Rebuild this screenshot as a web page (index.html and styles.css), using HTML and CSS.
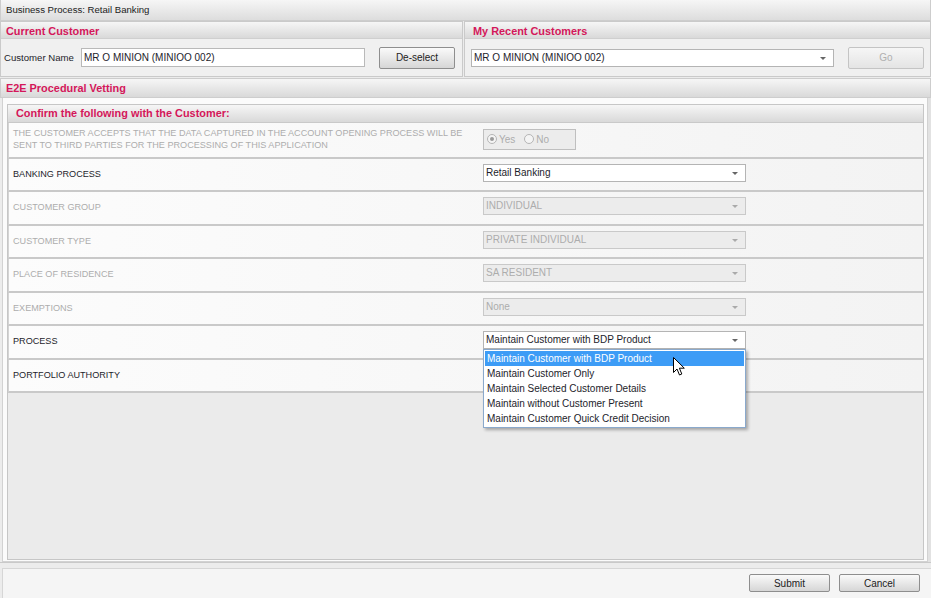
FILE: index.html
```html
<!DOCTYPE html>
<html>
<head>
<meta charset="utf-8">
<title>Business Process: Retail Banking</title>
<link rel="stylesheet" href="styles.css">
</head>
<body>
<div class="app">
  <div class="topbar">Business Process: Retail Banking</div>

  <div class="panels">
    <section class="panel">
      <div class="panel-head">Current Customer</div>
      <div class="panel-body">
        <span class="field-label">Customer Name</span>
        <div class="textbox">MR O MINION (MINIOO 002)</div>
        <button class="btn btn-deselect">De-select</button>
      </div>
    </section>
    <section class="panel panel-recent">
      <div class="panel-head">My Recent Customers</div>
      <div class="panel-body">
        <div class="select select-recent">MR O MINION (MINIOO 002)<span class="arrow"></span></div>
        <button class="btn btn-go" disabled>Go</button>
      </div>
    </section>
  </div>

  <div class="section-head">E2E Procedural Vetting</div>

  <div class="vetting">
    <div class="confirm">
      <div class="confirm-head">Confirm the following with the Customer:</div>
      <div class="rows">
        <div class="row row-first is-disabled">
          <div class="row-label">THE CUSTOMER ACCEPTS THAT THE DATA CAPTURED IN THE ACCOUNT OPENING PROCESS WILL BE<br>SENT TO THIRD PARTIES FOR THE PROCESSING OF THIS APPLICATION</div>
          <div class="row-ctl">
            <div class="radios">
              <span class="radio checked"></span><span class="radio-text">Yes</span>
              <span class="radio"></span><span class="radio-text">No</span>
            </div>
          </div>
        </div>
        <div class="row">
          <div class="row-label">BANKING PROCESS</div>
          <div class="row-ctl"><div class="select">Retail Banking<span class="arrow"></span></div></div>
        </div>
        <div class="row is-disabled">
          <div class="row-label">CUSTOMER GROUP</div>
          <div class="row-ctl"><div class="select">INDIVIDUAL<span class="arrow"></span></div></div>
        </div>
        <div class="row is-disabled">
          <div class="row-label">CUSTOMER TYPE</div>
          <div class="row-ctl"><div class="select">PRIVATE INDIVIDUAL<span class="arrow"></span></div></div>
        </div>
        <div class="row is-disabled">
          <div class="row-label">PLACE OF RESIDENCE</div>
          <div class="row-ctl"><div class="select">SA RESIDENT<span class="arrow"></span></div></div>
        </div>
        <div class="row is-disabled">
          <div class="row-label">EXEMPTIONS</div>
          <div class="row-ctl"><div class="select">None<span class="arrow"></span></div></div>
        </div>
        <div class="row row-open">
          <div class="row-label">PROCESS</div>
          <div class="row-ctl">
            <div class="select select-open">Maintain Customer with BDP Product<span class="arrow"></span></div>
            <ul class="dropdown">
              <li class="selected">Maintain Customer with BDP Product</li>
              <li>Maintain Customer Only</li>
              <li>Maintain Selected Customer Details</li>
              <li>Maintain without Customer Present</li>
              <li>Maintain Customer Quick Credit Decision</li>
            </ul>
            <svg class="cursor" width="13" height="20" viewBox="0 0 13 20"><path d="M0.5 0.5 L0.5 15.5 L4 12 L6.5 18 L8.8 17 L6.4 11.2 L11.3 11.2 Z" fill="#fff" stroke="#000" stroke-width="1" stroke-linejoin="round"/></svg>
          </div>
        </div>
        <div class="row">
          <div class="row-label">PORTFOLIO AUTHORITY</div>
          <div class="row-ctl"></div>
        </div>
      </div>
    </div>
  </div>

  <div class="footer">
    <div class="footer-box">
      <button class="btn btn-foot">Submit</button>
      <button class="btn btn-foot">Cancel</button>
    </div>
  </div>
</div>
</body>
</html>
```

FILE: styles.css
```css
* { box-sizing: border-box; margin: 0; padding: 0; }
html, body { width: 931px; height: 598px; overflow: hidden; }
body {
  background: #ececec;
  font-family: "Liberation Sans", Arial, sans-serif;
  font-size: 9.6px;
  color: #1d1d2b;
}
.app { display: flex; flex-direction: column; height: 598px; }

.topbar {
  height: 21px;
  line-height: 20px;
  padding-left: 5px;
  background: linear-gradient(#f6f6f6, #dddddd);
  border: 1px solid #cdcdcd;
  border-top: none;
  color: #222;
}

.panels {
  display: grid;
  grid-template-columns: 463px 1fr;
  column-gap: 1px;
  height: 56px;
}
.panel {
  display: flex;
  flex-direction: column;
  border: 1px solid #cacaca;
  background: #f0f0f0;
}
.panel-head, .section-head {
  height: 17px;
  line-height: 18px;
  padding-left: 5px;
  background: linear-gradient(#f6f6f6, #d9d9d9);
  border-bottom: 1px solid #cfcfcf;
  color: #d4175a;
  font-weight: bold;
  font-size: 10.9px;
}
.panel-recent .panel-head { padding-left: 8px; }
.panel-body {
  flex: 1;
  display: flex;
  align-items: center;
  padding: 0 6px 0 3px;
}
.field-label { width: 77px; color: #1d1d2b; }
.textbox {
  width: 284px;
  height: 19px;
  line-height: 17px;
  padding-left: 2px;
  background: #fff;
  border: 1px solid #b9b9b9;
  font-size: 10px;
}
.btn {
  font-family: "Liberation Sans", Arial, sans-serif;
  font-size: 10px;
  color: #222;
  background: linear-gradient(#fafafa, #e8e8e8 50%, #d6d6d6);
  border: 1px solid #8e8e8e;
  border-radius: 2px;
}
.btn-deselect { width: 76px; height: 22px; margin-left: 14px; }
.btn-go {
  width: 76px; height: 22px; margin-left: auto; margin-right: 0;
  color: #b0b0b0;
  border-color: #c4c4c4;
  background: linear-gradient(#f6f6f6, #e4e4e4);
}

.select {
  position: relative;
  width: 263px;
  height: 18px;
  line-height: 16px;
  padding-left: 2px;
  background: #fff;
  border: 1px solid #b4b4b4;
  font-size: 10px;
  color: #1d1d2b;
}
.select-recent { width: 363px; margin-left: 3px; }
.arrow {
  position: absolute;
  right: 7px;
  top: 7px;
  border-left: 3px solid transparent;
  border-right: 3px solid transparent;
  border-top: 3px solid #666;
}

.section-head {
  height: 20px;
  line-height: 19px;
  border: 1px solid #cdcdcd;
  margin-top: 1px;
}

.vetting {
  flex: 1;
  display: flex;
  flex-direction: column;
  background: #fbfbfb;
  border: 1px solid #d2d2d2;
  border-top: none;
  margin: 0 3px 0 2px;
  padding: 6px 3px 1px 4px;
  box-shadow: 3px 0 0 #e2e2e2;
}
.confirm {
  flex: 1;
  display: flex;
  flex-direction: column;
  border: 1px solid #c6c6c6;
  background: #ebebeb;
}
.confirm-head {
  height: 18px;
  line-height: 17px;
  padding-left: 8px;
  background: linear-gradient(#f6f6f6, #d9d9d9);
  border-bottom: 1px solid #c9c9c9;
  color: #d4175a;
  font-weight: bold;
  font-size: 10.9px;
}
.rows { display: flex; flex-direction: column; }
.row {
  display: grid;
  grid-template-columns: 474px 1fr;
  align-items: center;
  height: 33.5px;
  background: linear-gradient(90deg, #fcfcfc, #f3f3f3);
  border-bottom: 2px solid #c9c9c9;
  border-left: 1px solid #d4d4d4;
}
.row-first { height: 35.5px; }
.row-label { padding-left: 4px; font-size: 9.1px; line-height: 11.5px; color: #1d1d2b; }
.is-disabled .row-label { color: #adadad; }
.is-disabled .select { background: #ececec; border-color: #c9c9c9; color: #acacac; }
.is-disabled .select .arrow { border-top-color: #aaa; }
.row-ctl { position: relative; height: 18px; margin-bottom: 3px; }
.row-first .row-ctl { height: 21px; margin-bottom: 1px; }

.radios {
  display: flex;
  align-items: center;
  width: 93px;
  height: 21px;
  padding-left: 3px;
  background: #ececec;
  border: 1px solid #bfbfbf;
  color: #adadad;
  font-size: 10px;
}
.radio {
  width: 10px; height: 10px;
  border-radius: 50%;
  border: 1px solid #b5b5b5;
  background: #f4f4f4;
  position: relative;
}
.radio.checked::after {
  content: "";
  position: absolute;
  left: 2px; top: 2px;
  width: 4px; height: 4px;
  border-radius: 50%;
  background: #9a9a9a;
}
.radio-text { margin: 0 9px 0 2px; }

.dropdown {
  list-style: none;
  position: absolute;
  left: 0;
  top: 18px;
  width: 263px;
  padding: 1px 1px;
  background: #fff;
  border: 1px solid #8aa9cc;
  box-shadow: 2px 2px 3px rgba(0,0,0,0.3);
  font-size: 10px;
  z-index: 5;
}
.dropdown li { height: 15px; line-height: 15px; padding-left: 2px; color: #1d1d2b; }
.dropdown li.selected { background: #3d9cf6; color: #fff; }
.cursor { position: absolute; left: 190px; top: 26px; z-index: 6; }

.footer {
  height: 36px;
  border-top: 1px solid #c9c9c9;
  padding-top: 5px;
  background: #ececec;
}
.footer-box {
  height: 100%;
  margin-left: 2px;
  background: #f5f5f5;
  border: 1px solid #d6d6d6;
  border-right: none;
  border-bottom: none;
  display: flex;
  justify-content: flex-end;
  align-items: flex-start;
  gap: 9px;
  padding: 5px 11px 0 0;
}
.btn-foot { width: 81px; height: 18px; }
```
